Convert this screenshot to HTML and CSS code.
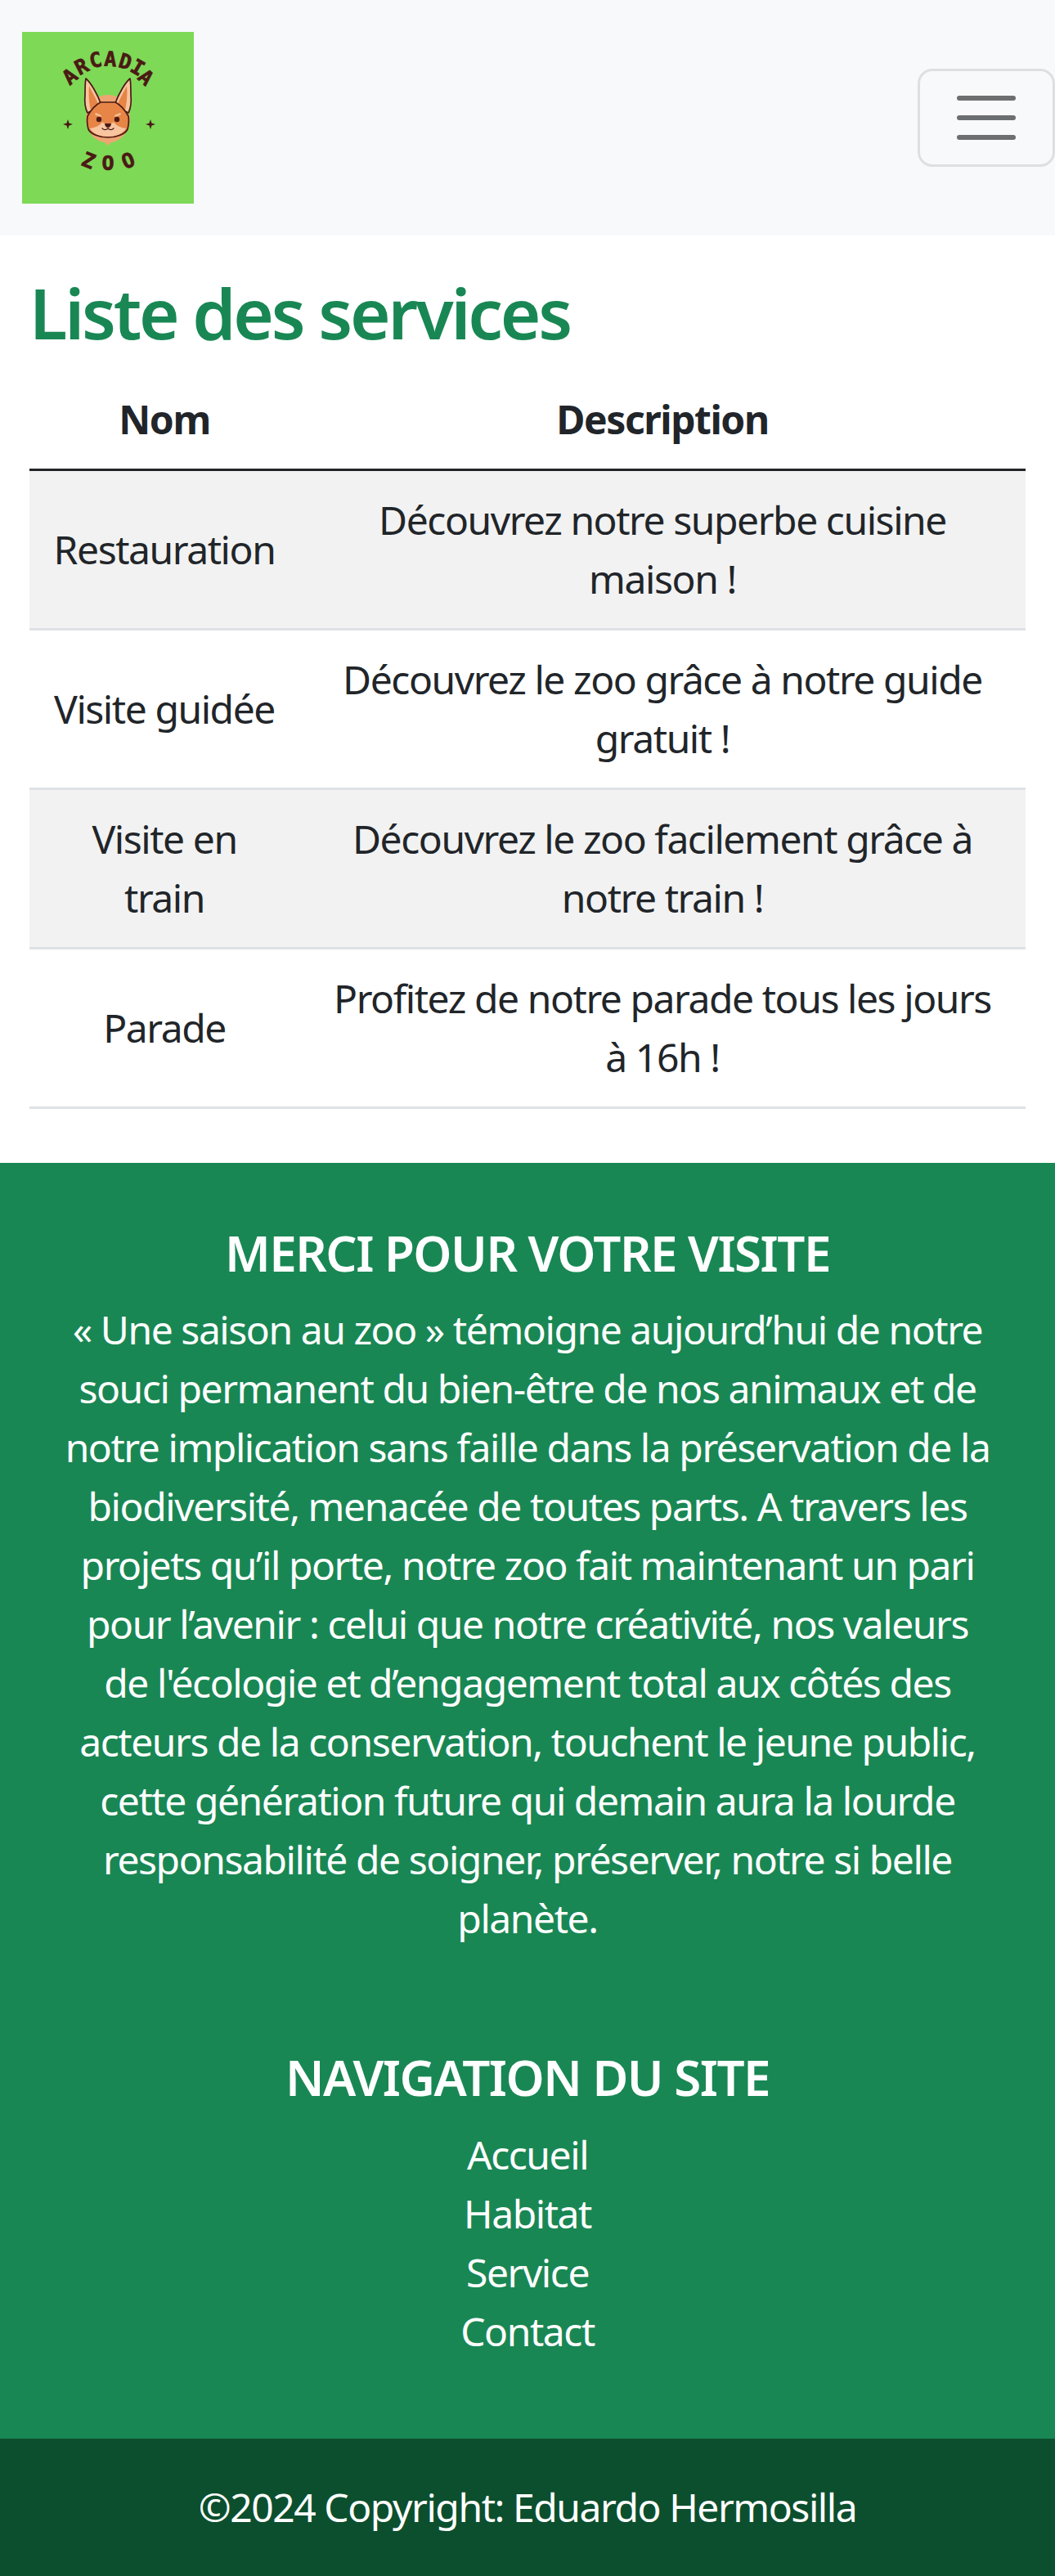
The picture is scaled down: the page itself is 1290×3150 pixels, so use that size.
FILE: index.html
```html
<!DOCTYPE html>
<html lang="fr">
<head>
    <meta charset="UTF-8">
    <meta name="viewport" content="width=device-width, initial-scale=1.0">
    <title>Liste des services</title>
    <link rel="stylesheet" href="styles.css">
</head>
<body>
<nav class="navbar">
    <a class="logo" href="#">
        <svg viewBox="0 0 210 210" width="210" height="210">
            <rect width="210" height="210" fill="#7ed957"/>
            <g class="logo-text">
                <text transform="translate(59 55) rotate(-40)" y="8">A</text>
                <text transform="translate(73 43) rotate(-27)" y="8">R</text>
                <text transform="translate(90 35) rotate(-12)" y="8">C</text>
                <text transform="translate(108 34) rotate(3)" y="8">A</text>
                <text transform="translate(126 37) rotate(17)" y="8">D</text>
                <text transform="translate(141 44) rotate(30)" y="8">I</text>
                <text transform="translate(151 56) rotate(42)" y="8">A</text>
                <text transform="translate(81 158) rotate(22)" y="8">Z</text>
                <text transform="translate(105 161)" y="8">O</text>
                <text transform="translate(130 158) rotate(-22)" y="8">O</text>
            </g>
            <path fill="#4a1a14" d="M56 107l1.500 4.500 4.500 1.500-4.500 1.500-1.500 4.500-1.500-4.500-4.500-1.500 4.500-1.500zM157 107l1.500 4.500 4.500 1.500-4.500 1.500-1.500 4.500-1.500-4.500-4.500-1.500 4.500-1.500z"/>
            <path fill="#eda673" d="M105 77c16 0 27 12 27 29 0 16-11 28-23 29l-4 4-4-4c-12-1-23-13-23-29 0-17 11-29 27-29z"/>
            <path fill="#f7c5a0" stroke="#4a1a14" stroke-width="1.700" stroke-linejoin="round" d="M78 57c6 5 14 19 18 30l-8 8-8 4c-3-6-4-12-3-22 0-8 0-15 1-20zM132 57c-6 5-14 19-18 30l8 8 8 4c3-6 4-12 3-22 0-8 0-15-1-20z"/>
            <path fill="#e68546" d="M82 66c3 6 8 15 11 22l-9 8c-2-8-3-20-2-30zM128 66c-3 6-8 15-11 22l9 8c2-8 3-20 2-30z"/>
            <path fill="#e68546" stroke="#4a1a14" stroke-width="1.700" stroke-linejoin="round" d="M96 86h18c6 3 12 10 16 17 1 6 0 12-1 16-3 6-13 10-24 10s-21-4-24-10c-1-4-2-10-1-16 4-7 10-14 16-17z"/>
            <path fill="#f7c5a0" d="M83 118c7-1 13-4 15-8 2 2 3 2 7 2s5 0 7-2c2 4 8 7 15 8-3 6-12 10-22 10s-19-4-22-10z"/>
            <path fill="#f7c5a0" d="M90 99l7 3-1 2-7-3zM120 99l-7 3 1 2 7-3z"/>
            <circle cx="94" cy="107" r="3.200" fill="#4a1a14"/>
            <circle cx="116" cy="107" r="3.200" fill="#4a1a14"/>
            <path fill="#4a1a14" d="M101 112h8c0 3-2 5-4 5s-4-2-4-5z"/>
            <path fill="none" stroke="#4a1a14" stroke-width="1.300" stroke-linecap="round" d="M98 118c2 2 5 2 7 0 2 2 5 2 7 0"/>
        </svg>
    </a>
    <button class="toggler" type="button">
        <svg viewBox="0 0 30 30" width="90" height="90">
            <path stroke="#6c6e70" stroke-width="2" stroke-linecap="round" d="M4 7h22M4 15h22M4 23h22"/>
        </svg>
    </button>
</nav>

<main class="content">
    <h1>Liste des services</h1>
    <table class="services">
        <thead>
            <tr>
                <th class="col-name">Nom</th>
                <th>Description</th>
            </tr>
        </thead>
        <tbody>
            <tr>
                <td>Restauration</td>
                <td>Découvrez notre superbe cuisine maison !</td>
            </tr>
            <tr>
                <td>Visite guidée</td>
                <td>Découvrez le zoo grâce à notre guide gratuit !</td>
            </tr>
            <tr>
                <td>Visite en train</td>
                <td>Découvrez le zoo facilement grâce à notre train !</td>
            </tr>
            <tr>
                <td>Parade</td>
                <td>Profitez de notre parade tous les jours à 16h !</td>
            </tr>
        </tbody>
    </table>
</main>

<footer class="footer">
    <div class="footer-main">
        <section class="footer-about">
            <h5>MERCI POUR VOTRE VISITE</h5>
            <p>« Une saison au zoo » témoigne aujourd’hui de notre souci permanent du bien-être de nos animaux et de notre implication sans faille dans la préservation de la biodiversité, menacée de toutes parts. A travers les projets qu’il porte, notre zoo fait maintenant un pari pour l’avenir : celui que notre créativité, nos valeurs de l'écologie et d’engagement total aux côtés des acteurs de la conservation, touchent le jeune public, cette génération future qui demain aura la lourde responsabilité de soigner, préserver, notre si belle planète.</p>
        </section>
        <section class="footer-nav">
            <h5>NAVIGATION DU SITE</h5>
            <ul>
                <li><a href="#">Accueil</a></li>
                <li><a href="#">Habitat</a></li>
                <li><a href="#">Service</a></li>
                <li><a href="#">Contact</a></li>
            </ul>
        </section>
    </div>
    <div class="copyright">©2024 Copyright: Eduardo Hermosilla</div>
</footer>
</body>
</html>
```

FILE: styles.css
```css
* {
    box-sizing: border-box;
}

body {
    margin: 0;
    font-family: "Noto Sans", "Open Sans", sans-serif;
    font-size: 48px;
    line-height: 72px;
    letter-spacing: -0.03em;
    color: #212529;
    background-color: #ffffff;
}

.navbar {
    display: flex;
    justify-content: space-between;
    align-items: center;
    height: 288px;
    padding-left: 27px;
    background-color: #f8f9fa;
}

.logo {
    display: block;
    width: 210px;
    height: 210px;
}

.logo svg {
    display: block;
}

.logo-text text {
    font-family: "DejaVu Sans Mono", monospace;
    font-size: 25px;
    font-weight: bold;
    letter-spacing: 0;
    text-anchor: middle;
    fill: #4a1a14;
    stroke: #4a1a14;
    stroke-width: 0.7px;
}

.toggler {
    width: 168px;
    height: 120px;
    padding: 12px 36px;
    border: 3px solid rgba(0, 0, 0, 0.1);
    border-radius: 18px;
    background: transparent;
    cursor: pointer;
}

.toggler svg {
    display: block;
}

.content {
    padding: 43px 36px 66px;
}

h1 {
    margin: 0 0 20px;
    font-size: 85px;
    font-weight: 600;
    line-height: 102px;
    letter-spacing: -0.038em;
    color: #198754;
}

.services {
    width: 100%;
    border-collapse: collapse;
    text-align: center;
}

.services th,
.services td {
    padding: 24px;
    border-bottom: 3px solid #dee2e6;
}

.services thead th {
    border-bottom-color: #212529;
    font-weight: bold;
}

.col-name {
    width: 330px;
}

.services tbody tr:nth-child(odd) {
    background-color: #f2f2f2;
}

.footer {
    color: #ffffff;
    text-align: center;
    background-color: #198754;
}

.footer-main {
    padding: 74px 76px 95px;
}

h5 {
    margin: 0 0 22px;
    font-size: 60px;
    font-weight: 600;
    line-height: 72px;
    letter-spacing: -0.025em;
}

.footer-about p {
    margin: 0 0 122px;
}

.footer-nav h5 {
    margin-bottom: 23px;
}

.footer-nav ul {
    margin: 0;
    padding: 0;
    list-style: none;
}

.footer-nav a {
    color: #ffffff;
    text-decoration: none;
}

.copyright {
    padding: 48px;
    background-color: #0c4f2e;
}
```
